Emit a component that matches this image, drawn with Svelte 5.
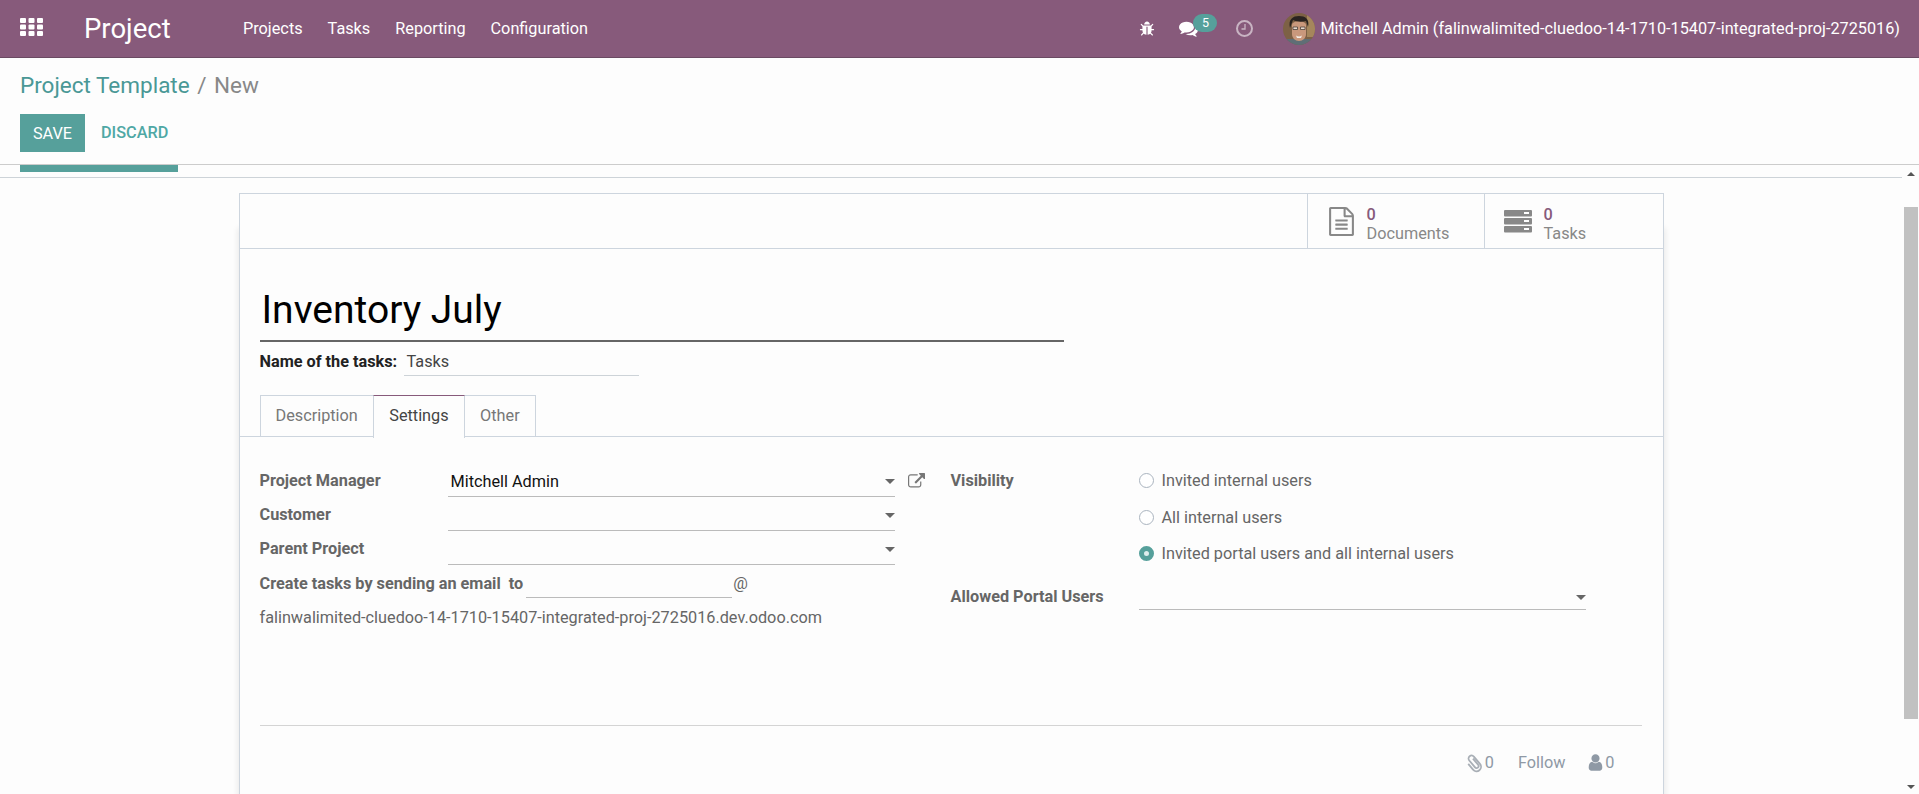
<script>
	const menus = ["Projects", "Tasks", "Reporting", "Configuration"];
	const tabs = ["Description", "Settings", "Other"];
	const radios = ["Invited internal users", "All internal users", "Invited portal users and all internal users"];
	let activeTab = "Settings";
	let visibility = radios[2];
</script>

<div class="page">
	<header class="topbar">
		<svg class="apps" width="23" height="18" viewBox="0 0 23 18">
			{#each [0, 6.5, 13] as y}
				{#each [0, 8.5, 17] as x}
					<rect {x} {y} width="6" height="5" rx="1" fill="#fff" />
				{/each}
			{/each}
		</svg>
		<span class="brand">Project</span>
		<nav class="menu">
			{#each menus as m}
				<span>{m}</span>
			{/each}
		</nav>
		<div class="systray">
			<svg class="bug" width="16" height="16" viewBox="0 0 1792 1792"><path fill="#fff" d="M1696 960q0 26-19 45t-45 19h-224q0 171-67 290l208 209q19 19 19 45t-19 45q-18 19-45 19t-45-19l-198-197q-5 5-15 13t-42 28.500-65 36.500-82 29-97 13v-896h-128v896q-51 0-101.500-13.500t-87-33-66-39-43.500-32.500l-15-14-183 207q-20 21-48 21-24 0-43-16-19-18-20.500-44.500t15.500-46.500l202-227q-58-114-58-274h-224q-26 0-45-19t-19-45 19-45 45-19h224v-294l-173-173q-19-19-19-45t19-45 45-19 45 19l173 173h844l173-173q19-19 45-19t45 19 19 45-19 45l-173 173v294h224q26 0 45 19t19 45zm-480-576h-640q0-133 93.500-226.500t226.500-93.500 226.500 93.500 93.500 226.500z"/></svg>
			<div class="chat">
				<svg width="19" height="19" viewBox="0 0 1792 1792"><path fill="#fff" d="M1408 768q0 139-94 257t-256.500 186.500-353.500 68.500q-86 0-176-16-124 88-278 128-36 9-86 16h-3q-11 0-20.500-8t-11.500-21q-1-3-1-6.500t.5-6.500 2-6l2.500-5 3.500-5.500 4-5 4.500-5 4-4.500q5-6 23-25t26-29.500 22.500-29 25-38.500 20.500-44q-124-72-195-177t-71-224q0-139 94-257t256.500-186.500 353.500-68.500 353.500 68.500 256.500 186.500 94 257zm384 256q0 120-71 224.500t-195 176.500q10 24 20.500 44t25 38.500 22.500 29 26 29.500 23 25q1 1 4 4.500t4.500 5 4 5 3.500 5.500l2.500 5 2 6 .5 6.500-1 6.500q-3 14-13 22t-22 7q-50-7-86-16-154-40-278-128-90 16-176 16-271 0-472-132 58 4 88 4 161 0 309-45t264-129q125-92 192-212t67-254q0-77-23-152 129 71 204 178t75 230z"/></svg>
				<span class="badge">5</span>
			</div>
			<svg class="clock" width="17" height="17" viewBox="0 0 17 17"><g fill="none" stroke="#fff" stroke-opacity=".55" stroke-width="2"><circle cx="8.500" cy="8.500" r="7.500"/><path stroke-width="1.300" d="M9 4v5H5.500"/></g></svg>
			<svg class="avatar" width="32" height="32" viewBox="0 0 32 32">
				<clipPath id="av"><circle cx="16" cy="16" r="16"/></clipPath>
				<g clip-path="url(#av)">
					<rect width="32" height="32" fill="#7d6145"/>
					<rect x="24" width="8" height="24" fill="#a5865c"/>
					<rect y="26" width="32" height="6" fill="#5f6e76"/>
					<path d="M9 12c0-5 14-5 14 0v9c0 4-3 7-7 7s-7-3-7-7z" fill="#c9987c"/>
					<path d="M7 15C5 6 10 3 16 3s11 3 9 11l-2-6c-4 1-9 1-13-1z" fill="#2a2320"/>
					<path d="M10 14h4.500v2.500H10zM17.500 14H22v2.500h-4.500z" fill="#e6d8cc" stroke="#3a3532" stroke-width=".7"/>
					<path d="M13 22.500c2 1.200 4 1.200 6 0l-1 2.500h-4z" fill="#f3eee8"/>
				</g>
			</svg>
			<span class="user">Mitchell Admin (falinwalimited-cluedoo-14-1710-15407-integrated-proj-2725016)</span>
		</div>
	</header>

	<section class="control">
		<div class="crumbs"><span class="link">Project Template</span><span class="sep">/</span><span class="now">New</span></div>
		<div class="actions">
			<button class="save">SAVE</button>
			<button class="discard">DISCARD</button>
		</div>
	</section>

	<div class="main">
		<div class="content">
			<div class="sliver"><div class="bar"></div></div>
			<div class="card">
				<div class="stats">
					<div class="stat docs">
						<svg width="29" height="29" viewBox="0 0 1792 1792"><path fill="#888" d="M1596 380q28 28 48 76t20 88v1152q0 40-28 68t-68 28h-1344q-40 0-68-28t-28-68v-1600q0-40 28-68t68-28h896q40 0 88 20t76 48zm-444-244v376h376q-10-29-22-41l-313-313q-12-12-41-22zm384 1528v-1024h-416q-40 0-68-28t-28-68v-416h-768v1536h1280zm-1024-864q0-14 9-23t23-9h704q14 0 23 9t9 23v64q0 14-9 23t-23 9h-704q-14 0-23-9t-9-23v-64zm736 224q14 0 23 9t9 23v64q0 14-9 23t-23 9h-704q-14 0-23-9t-9-23v-64q0-14 9-23t23-9h704zm0 256q14 0 23 9t9 23v64q0 14-9 23t-23 9h-704q-14 0-23-9t-9-23v-64q0-14 9-23t23-9h704z"/></svg>
						<div><b>0</b><span>Documents</span></div>
					</div>
					<div class="stat tasks">
						<svg width="28" height="23" viewBox="0 0 28 23">
							{#each [0, 8, 16] as y}
								<rect {y} width="28" height="6.500" rx="1" fill="#888" />
								<rect x="20" y={y + 2} width="5" height="2" fill="#fff" />
							{/each}
						</svg>
						<div><b>0</b><span>Tasks</span></div>
					</div>
				</div>

				<div class="sheet">
					<h1>Inventory July</h1>
					<div class="taskname">
						<label for="tn">Name of the tasks:</label>
						<span id="tn" class="line">Tasks</span>
					</div>

					<ul class="tabs">
						{#each tabs as t}
							<li class:active={t === activeTab}>{t}</li>
						{/each}
					</ul>

					<div class="columns">
						<div class="left">
							<div class="row">
								<span class="lbl">Project Manager</span>
								<span class="field dark">Mitchell Admin<i class="caret"></i></span>
								<svg class="ext" width="17" height="17" viewBox="0 0 1792 1792"><path fill="#777" d="M1408 928v320q0 119-84.500 203.500t-203.500 84.500h-832q-119 0-203.500-84.500t-84.500-203.500v-832q0-119 84.500-203.500t203.500-84.500h704q14 0 23 9t9 23v64q0 14-9 23t-23 9h-704q-66 0-113 47t-47 113v832q0 66 47 113t113 47h832q66 0 113-47t47-113v-320q0-14 9-23t23-9h64q14 0 23 9t9 23zm384-864v512q0 26-19 45t-45 19-45-19l-176-176-652 652q-10 10-23 10t-23-10l-114-114q-10-10-10-23t10-23l652-652-176-176q-19-19-19-45t19-45 45-19h512q26 0 45 19t19 45z"/></svg>
							</div>
							<div class="row">
								<span class="lbl">Customer</span>
								<span class="field"><i class="caret"></i></span>
							</div>
							<div class="row">
								<span class="lbl">Parent Project</span>
								<span class="field"><i class="caret"></i></span>
							</div>
							<div class="mailrow">
								<span class="lbl">Create tasks by sending an email&nbsp; to</span>
								<span class="mailinput"></span>
								<span class="at">@</span>
							</div>
							<div class="domain">falinwalimited-cluedoo-14-1710-15407-integrated-proj-2725016.dev.odoo.com</div>
						</div>

						<div class="right">
							<div class="vis">
								<span class="lbl vislbl">Visibility</span>
								<div class="radios">
									{#each radios as r}
										<div class="radio">
											<i class:on={r === visibility}></i>{r}
										</div>
									{/each}
								</div>
							</div>
							<div class="row portal">
								<span class="lbl">Allowed Portal Users</span>
								<span class="field"><i class="caret"></i></span>
							</div>
						</div>
					</div>

					<div class="chatter">
						<svg width="20" height="20" viewBox="2 2 20 20"><path transform="rotate(-40 12 12) translate(6 3)" fill="none" stroke="#a9afb6" stroke-width="1.800" d="M8 5v8a2 2 0 0 1-4 0V4a3 3 0 0 1 6 0v9.500a4.500 4.500 0 0 1-9 0V6"/></svg>
						<span class="num">0</span>
						<span class="follow">Follow</span>
						<svg class="person" width="19" height="19" viewBox="0 0 1792 1792"><path fill="#8f99a5" d="M1536 1399q0 109-62.500 187t-150.500 78h-854q-88 0-150.500-78t-62.500-187q0-85 8.500-160.500t31.500-152 58.500-131 94-89 134.500-34.500q131 128 313 128t313-128q76 0 134.500 34.500t94 89 58.500 131 31.500 152 8.500 160.500zm-256-887q0 159-112.500 271.500t-271.500 112.500-271.500-112.500-112.500-271.500 112.500-271.500 271.500-112.500 271.500 112.500 112.500 271.500z"/></svg>
						<span class="num pnum">0</span>
					</div>
				</div>
			</div>
		</div>

		<div class="scrollbar">
			<i class="up"></i>
			<div class="thumb"></div>
			<i class="down"></i>
		</div>
	</div>
</div>

<style>
	:global(body) {
		margin: 0;
		background: #fdfdfd;
	}
	.page {
		height: 794px;
		overflow: hidden;
		display: flex;
		flex-direction: column;
		font-family: Roboto, "Liberation Sans", sans-serif;
		font-size: 16.25px;
		color: #666;
	}

	.topbar {
		flex: none;
		height: 57px;
		background: #875a7b;
		border-bottom: 1px solid #6a4a62;
		display: flex;
		align-items: center;
		padding: 0 19px 0 20px;
		color: #fff;
	}
	.apps {
		margin-top: -4px;
	}
	.brand {
		font-size: 27.5px;
		margin-left: 41px;
		width: 159px;
	}
	.menu {
		display: flex;
		gap: 25px;
	}
	.systray {
		margin-left: auto;
		display: flex;
		align-items: center;
	}
	.chat {
		display: flex;
		margin-left: 24px;
		position: relative;
		width: 52px;
	}
	.badge {
		position: absolute;
		left: 14px;
		top: -5px;
		width: 24px;
		height: 18px;
		border-radius: 10px;
		background: #56a09b;
		font-size: 12.500px;
		text-align: center;
		line-height: 18px;
	}
	.clock {
		margin-left: 5px;
	}
	.avatar {
		margin-left: 30px;
		margin-right: 5px;
	}

	.control {
		flex: none;
		height: 106px;
		border-bottom: 1px solid #ccc;
		padding-left: 20px;
	}
	.crumbs {
		font-size: 22.500px;
		line-height: 26px;
		padding-top: 14px;
	}
	.crumbs .link {
		color: #4a9896;
	}
	.crumbs .sep {
		color: #888;
		margin: 0 7.500px;
	}
	.crumbs .now {
		color: #888;
	}
	.actions {
		display: flex;
		align-items: center;
		margin-top: 16px;
	}
	button {
		font-family: inherit;
		font-size: 16.250px;
		border: 0;
		padding: 0;
		height: 38px;
		background: none;
	}
	.save {
		width: 65px;
		background: #56a09b;
		color: #fff;
	}
	.discard {
		color: #4fa8a5;
		font-weight: 500;
		margin-left: 16px;
		padding-bottom: 1px;
	}

	.main {
		flex: 1;
		display: flex;
		min-height: 0;
	}
	.content {
		flex: 1;
		min-width: 0;
	}
	.sliver {
		height: 12px;
		border-bottom: 1px solid #cdd3d8;
		padding-left: 20px;
	}
	.bar {
		width: 158px;
		height: 7px;
		background: #56a09b;
	}

	.card {
		width: 1425px;
		margin: 15px auto 0;
		box-sizing: border-box;
		border: 1px solid #cdd5de;
		border-bottom: 0;
		background: #fdfdfd;
		box-shadow: 0 36px 6px 1px #e8e8e8;
		height: 700px;
	}
	.stats {
		height: 54px;
		display: flex;
		justify-content: flex-end;
		border-bottom: 1px solid #cdd5de;
	}
	.stat {
		display: flex;
		align-items: center;
		border-left: 1px solid #cdd5de;
		box-sizing: border-box;
		color: #888;
		line-height: 19px;
	}
	.stat div {
		display: flex;
		flex-direction: column;
		padding-top: 6px;
	}
	.stat b {
		color: #875a7b;
		font-weight: 500;
	}
	.docs {
		width: 177px;
		padding-left: 19px;
		gap: 11px;
	}
	.tasks {
		width: 179px;
		padding-left: 19px;
		gap: 12px;
	}

	.sheet {
		padding: 0 21px 0 20px;
	}
	h1 {
		margin: 31px 0 0;
		width: 804px;
		box-sizing: border-box;
		height: 62px;
		border-bottom: 2px solid #666;
		font-size: 39px;
		font-weight: 400;
		line-height: 61px;
		color: #000;
		padding-left: 2px;
	}
	.taskname {
		display: flex;
		align-items: flex-start;
		height: 35px;
	}
	.taskname label {
		font-weight: 700;
		color: #222;
		width: 144px;
		line-height: 40px;
	}
	.taskname .line {
		width: 232px;
		height: 33px;
		padding-left: 3px;
		line-height: 40px;
		border-bottom: 1px solid #cdd3d8;
		color: #444;
	}
	.tabs {
		list-style: none;
		display: flex;
		margin: 18px -21px 0 -20px;
		padding: 0 0 0 20px;
		height: 41px;
		border-bottom: 1px solid #cdd5de;
	}
	.tabs li {
		padding: 0 15px;
		line-height: 40px;
		border: 1px solid #cdd5de;
		border-bottom: 0;
		color: #777;
		margin-right: -1px;
		height: 41px;
	}
	.tabs li.active {
		color: #444;
		background: #fdfdfd;
		border-top-color: #875a7b;
		height: 42px;
		padding: 0 15.500px;
		position: relative;
	}

	.columns {
		display: flex;
		padding-top: 27px;
		height: 289px;
		box-sizing: border-box;
		border-bottom: 1px solid #d4d4d4;
	}
	.left {
		width: 691px;
	}
	.right {
		flex: 1;
	}
	.row {
		display: flex;
		align-items: flex-start;
		height: 34px;
		position: relative;
		line-height: 34px;
	}
	.lbl {
		font-weight: 700;
		color: #666;
	}
	.row .lbl {
		width: 188px;
		flex: none;
	}
	.field {
		width: 445px;
		height: 31.500px;
		border-bottom: 1px solid #bbb;
		position: relative;
		line-height: 34px;
		padding-left: 2px;
	}
	.field.dark {
		color: #111;
		width: 444px;
		padding-left: 3px;
		line-height: 36px;
	}
	.caret {
		position: absolute;
		right: 0;
		top: 15px;
		border: 5px solid transparent;
		border-top-color: #666;
		border-bottom: 0;
	}
	.ext {
		margin: 9px 0 0 13px;
	}
	.mailrow {
		display: flex;
		align-items: flex-start;
		height: 34px;
		line-height: 36px;
	}
	.mailinput {
		width: 206px;
		height: 31px;
		border-bottom: 1px solid #bbb;
		margin-left: 3px;
	}
	.at {
		margin-left: 1px;
	}
	.domain {
		line-height: 34px;
		margin-top: 1px;
	}

	.vis {
		display: flex;
	}
	.vislbl {
		width: 188px;
		flex: none;
		line-height: 34px;
	}
	.radios {
		margin-top: -1.500px;
	}
	.radio {
		display: flex;
		align-items: center;
		height: 36.500px;
	}
	.radio i {
		width: 15px;
		height: 15px;
		box-sizing: border-box;
		border-radius: 50%;
		border: 1px solid #aab4bf;
		background: #fff;
		margin-right: 8px;
	}
	.radio i.on {
		border: 5px solid #56a09b;
		background: #dfeeed;
	}
	.portal {
		margin-top: 7.500px;
	}
	.portal .field {
		height: 29px;
	}
	.portal .caret {
		top: 15px;
	}

	.chatter {
		display: flex;
		align-items: center;
		justify-content: flex-end;
		height: 73px;
		color: #8f99a5;
		padding-right: 27px;
	}
	.chatter .num {
		margin-left: 1px;
	}
	.follow {
		margin: 0 21px 0 24px;
	}
	.chatter .pnum {
		margin-left: 0;
	}

	.scrollbar {
		width: 17px;
		flex: none;
		position: relative;
	}
	.up,
	.down {
		position: absolute;
		left: 5px;
	}
	.up {
		top: 7px;
		border-left: 4px solid transparent;
		border-right: 4px solid transparent;
		border-bottom: 4px solid #555;
	}
	.down {
		top: 620px;
		border-left: 4px solid transparent;
		border-right: 4px solid transparent;
		border-top: 4px solid #555;
	}
	.thumb {
		position: absolute;
		left: 2px;
		top: 42px;
		width: 14px;
		height: 512px;
		background: #c1c1c1;
	}
</style>
